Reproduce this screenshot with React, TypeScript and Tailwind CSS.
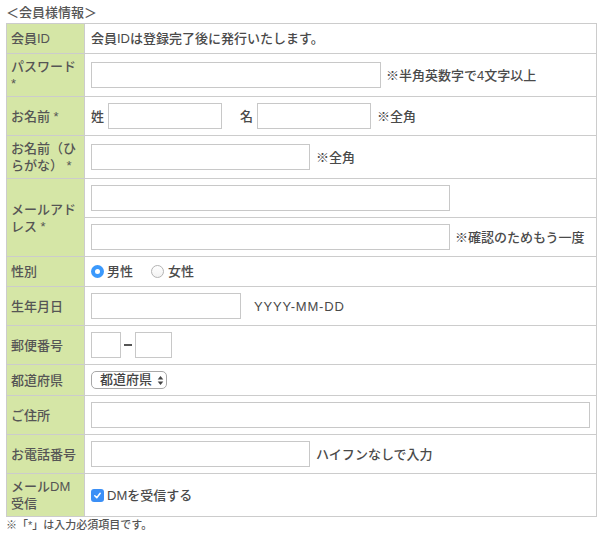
import React from 'react';

const inputCls = 'h-[26px] border border-[#c8c8c8] bg-white';

function Note({ children, className = '' }: { children: React.ReactNode; className?: string }) {
  return <span className={`whitespace-nowrap ${className}`}>{children}</span>;
}

function Radio({ checked, className = '' }: { checked?: boolean; className?: string }) {
  if (checked) {
    return (
      <span className={`flex h-[13px] w-[13px] shrink-0 items-center justify-center rounded-full bg-[#3b99fc] ${className}`}>
        <span className="h-[5px] w-[5px] rounded-full bg-white" />
      </span>
    );
  }
  return (
    <span
      className={`block h-[13px] w-[13px] shrink-0 rounded-full border border-[#b4b4b4] bg-gradient-to-b from-white to-[#f2f2f2] ${className}`}
    />
  );
}

function Checkbox() {
  return (
    <span className="flex h-[13px] w-[13px] shrink-0 items-center justify-center rounded-[3px] bg-[#3b8ff6]">
      <svg width="9" height="9" viewBox="0 0 10 10" fill="none">
        <path d="M2 5.3 L4.2 7.4 L8 2.6" stroke="white" strokeWidth="1.7" strokeLinecap="round" strokeLinejoin="round" />
      </svg>
    </span>
  );
}

function Label({ children, rowSpan }: { children: React.ReactNode; rowSpan?: number }) {
  return (
    <th
      rowSpan={rowSpan}
      className="border border-[#cccccc] bg-[#d5e6a6] px-[4px] py-[4px] text-left align-middle font-medium text-[#555]"
    >
      {children}
    </th>
  );
}

function Cell({ children }: { children: React.ReactNode }) {
  return (
    <td className="border border-[#cccccc] bg-white px-[6px] py-[6px] align-middle">
      <div className="flex items-center">{children}</div>
    </td>
  );
}

export default function App() {
  return (
    <div className="min-h-[533px] bg-white pl-[6px] font-['Liberation_Sans','Noto_Sans_CJK_JP',sans-serif] text-[13px] font-medium leading-[17px] text-[#4a4a4a]">
      <div className="pt-[4px] pb-[2px] leading-[17px] text-[#555]">＜会員様情報＞</div>
      <table className="w-[591px] table-fixed border-collapse">
        <colgroup>
          <col className="w-[78px]" />
          <col />
        </colgroup>
        <tbody>
          <tr>
            <Label>会員ID</Label>
            <Cell>
              <span>会員IDは登録完了後に発行いたします。</span>
            </Cell>
          </tr>
          <tr>
            <Label>
              パスワード
              <br />*
            </Label>
            <Cell>
              <span className={`${inputCls} w-[290px]`} />
              <Note className="ml-[5px]">※半角英数字で4文字以上</Note>
            </Cell>
          </tr>
          <tr>
            <Label>お名前 *</Label>
            <Cell>
              <span>姓</span>
              <span className={`${inputCls} ml-[4px] w-[114px]`} />
              <span className="ml-[18px]">名</span>
              <span className={`${inputCls} ml-[4px] w-[114px]`} />
              <Note className="ml-[6px]">※全角</Note>
            </Cell>
          </tr>
          <tr>
            <Label>
              お名前（ひ
              <br />
              らがな） *
            </Label>
            <Cell>
              <span className={`${inputCls} w-[219px]`} />
              <Note className="ml-[6px]">※全角</Note>
            </Cell>
          </tr>
          <tr>
            <Label rowSpan={2}>
              メールアド
              <br />
              レス *
            </Label>
            <Cell>
              <span className={`${inputCls} w-[359px]`} />
            </Cell>
          </tr>
          <tr>
            <Cell>
              <span className={`${inputCls} w-[359px]`} />
              <Note className="ml-[5px]">※確認のためもう一度</Note>
            </Cell>
          </tr>
          <tr>
            <Label>性別</Label>
            <Cell>
              <Radio checked />
              <span className="ml-[3px]">男性</span>
              <Radio className="ml-[18px]" />
              <span className="ml-[4px]">女性</span>
            </Cell>
          </tr>
          <tr>
            <Label>生年月日</Label>
            <Cell>
              <span className={`${inputCls} w-[150px]`} />
              <Note className="ml-[13px] tracking-[0.8px]">YYYY-MM-DD</Note>
            </Cell>
          </tr>
          <tr>
            <Label>郵便番号</Label>
            <Cell>
              <span className={`${inputCls} w-[30px]`} />
              <span className="mx-[3px] h-[1.5px] w-[8px] bg-[#555]" />
              <span className={`${inputCls} w-[37px]`} />
            </Cell>
          </tr>
          <tr>
            <Label>都道府県</Label>
            <Cell>
              <span className="flex h-[18px] w-[76px] items-center rounded-[5px] border border-[#a8a8a8] bg-white pl-[8px] text-[13px] leading-[16px] text-[#444]">
                <span>都道府県</span>
                <svg className="ml-[5px]" width="7" height="11" viewBox="0 0 7 11">
                  <path d="M3.5 1 L6.3 4.4 H0.7 Z" fill="#444" />
                  <path d="M3.5 10 L6.3 6.6 H0.7 Z" fill="#444" />
                </svg>
              </span>
            </Cell>
          </tr>
          <tr>
            <Label>ご住所</Label>
            <Cell>
              <span className={`${inputCls} w-[499px]`} />
            </Cell>
          </tr>
          <tr>
            <Label>お電話番号</Label>
            <Cell>
              <span className={`${inputCls} w-[219px]`} />
              <Note className="ml-[6px]">ハイフンなしで入力</Note>
            </Cell>
          </tr>
          <tr>
            <Label>
              メールDM
              <br />
              受信
            </Label>
            <Cell>
              <Checkbox />
              <span className="ml-[3px]">DMを受信する</span>
            </Cell>
          </tr>
        </tbody>
      </table>
      <div className="pt-[1px] text-[11px] leading-[15px] text-[#555]">※「*」は入力必須項目です。</div>
    </div>
  );
}
